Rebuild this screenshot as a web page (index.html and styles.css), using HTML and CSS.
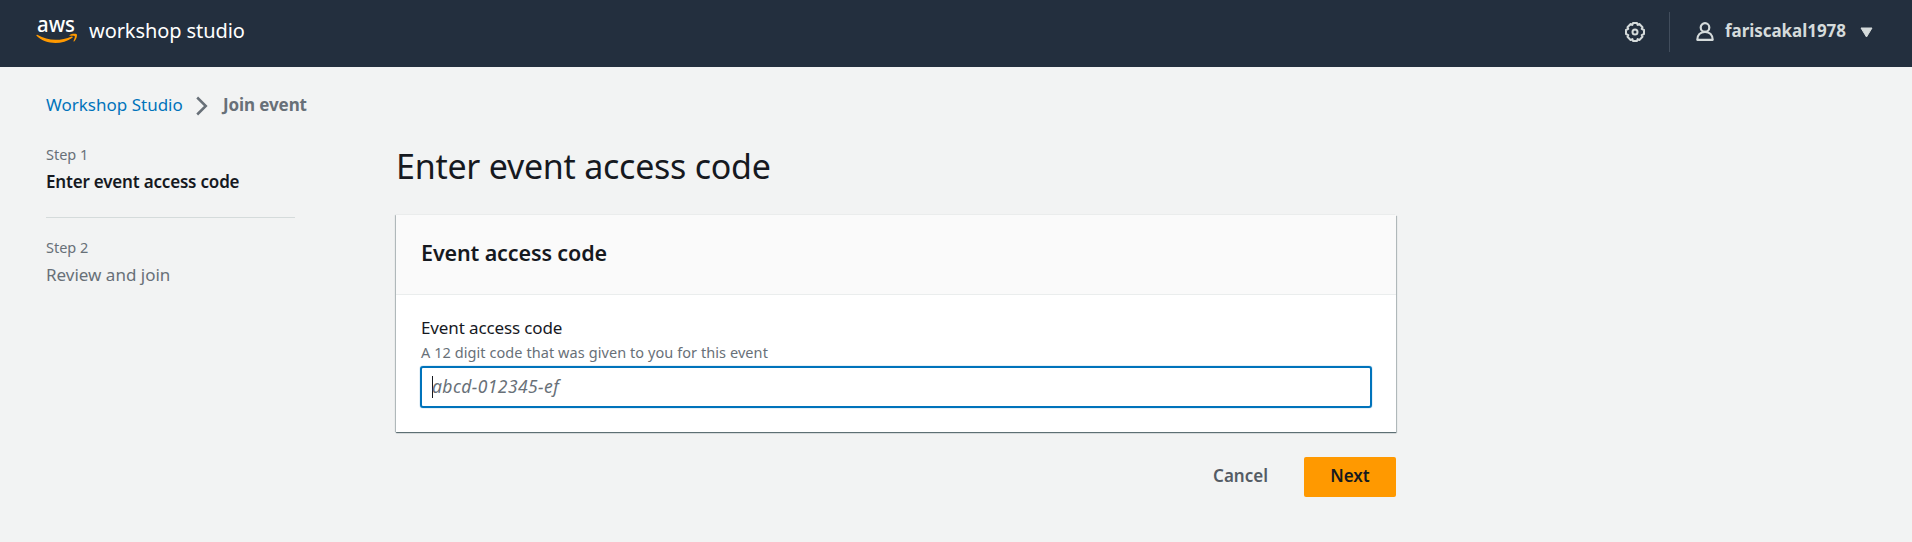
FILE: index.html
```html
<!DOCTYPE html>
<html lang="en">
<head>
<meta charset="utf-8">
<title>Join event - Workshop Studio</title>
<link rel="stylesheet" href="styles.css">
</head>
<body>
<header class="topbar">
  <a class="brand">
    <svg class="logo" width="42" height="28" viewBox="0 0 42 28">
      <text class="logo-text" x="1" y="14" textLength="38" lengthAdjust="spacingAndGlyphs">aws</text>
      <path fill="#ff9900" d="M0.500 17.200c0.300-.5.800-.4 1.200-.1C11.500 23 24.500 23.300 35.600 18.500c1-.4 1.600.6.800 1.200C26 27.200 9.500 26.600.7 18c-.3-.3-.4-.5-.2-.8z"/>
      <path fill="#ff9900" d="M33.500 17.200c2-1.500 5.500-1.700 7.300-.9.7 1.600-.5 5.400-2.600 7.100-.5.400-.9.200-.7-.3.600-1.500 1.700-4.300 1.300-4.900-.6-.7-3.500-.5-4.900-.4-.6 0-.8-.3-.4-.6z"/>
    </svg>
    <span class="brand-name">workshop studio</span>
  </a>
  <div class="utilities">
    <svg class="gear" width="20" height="20" viewBox="0 0 20 20" fill="none" stroke="#d5dbdb" stroke-width="2" stroke-linejoin="round">
      <path d="M8 1h4l.6 1.900 1.800-.9L17.500 5.200l-.8 1.700L19 8v4l-2.300 1.100.8 1.700-3.100 3.200-1.800-.9L12 19H8l-.6-1.900-1.800.9L2.500 14.800l.8-1.700L1 12V8l2.300-1.100-.8-1.700L5.600 2l1.800.9z"/>
      <circle cx="10" cy="10" r="2.500"/>
    </svg>
    <span class="separator"></span>
    <svg class="user-icon" width="18" height="19" viewBox="0 0 18 19" fill="none" stroke="#d5dbdb" stroke-width="2.200" stroke-linejoin="round">
      <circle cx="9" cy="5.500" r="4.300"/>
      <path d="M1.300 17.800c0-4.800 3.200-8 7.700-8s7.700 3.200 7.700 8z"/>
    </svg>
    <span class="user-name">fariscakal1978</span>
    <svg class="caret-down" width="13" height="11" viewBox="0 0 13 11"><path d="M1 1h11L6.500 10z" fill="#d5dbdb" stroke="#d5dbdb" stroke-linejoin="round"/></svg>
  </div>
</header>
<nav class="breadcrumb">
  <a class="crumb-link">Workshop Studio</a>
  <svg class="chevron" width="12" height="20" viewBox="0 0 12 20" fill="none" stroke="#687078" stroke-width="2.500"><path d="M1.200 1.500 9.800 10l-8.600 8.500"/></svg>
  <span class="crumb-current">Join event</span>
</nav>
<div class="wizard">
  <ol class="steps">
    <li class="step"><span class="step-number">Step 1</span><span class="step-title active">Enter event access code</span></li>
    <li class="step"><span class="step-number">Step 2</span><span class="step-title">Review and join</span></li>
  </ol>
  <main class="content">
    <h1 class="page-title">Enter event access code</h1>
    <section class="card">
      <div class="card-header"><h2 class="card-title">Event access code</h2></div>
      <div class="card-body">
        <span class="label">Event access code</span>
        <span class="hint">A 12 digit code that was given to you for this event</span>
        <div class="input"><span class="cursor"></span><span class="placeholder">abcd-012345-ef</span></div>
      </div>
    </section>
    <div class="actions"><span class="button cancel">Cancel</span><span class="button next">Next</span></div>
  </main>
</div>
</body>
</html>
```
FILE: styles.css
```css
body {
  margin: 0;
  min-height: 540px;
  background: #f2f3f3;
  color: #16191f;
  font-family: "Noto Sans", "Open Sans", sans-serif;
  font-size: 17px;
  line-height: 28px;
  white-space: nowrap;
}
.topbar {
  box-sizing: border-box;
  display: flex;
  justify-content: space-between;
  height: 67px;
  padding: 12px 39px 0 36px;
  background: #232f3e;
}
.brand { display: flex; }
.logo { margin-top: 6px; overflow: visible; }
.logo-text { fill: #fff; font-family: "Noto Sans", sans-serif; font-size: 21px; font-weight: 500; }
.brand-name { margin: 5px 0 0 11px; color: #fff; font-size: 20px; letter-spacing: -.08px; }
.utilities { display: flex; align-items: flex-start; color: #d5dbdb; }
.gear { margin-top: 10px; }
.separator { width: 1px; height: 40px; margin: 0 26px 0 24px; background: #414d5c; }
.user-icon { margin-top: 10px; }
.user-name { width: 121px; margin: 5px 14px 0 11px; font-weight: 700; letter-spacing: -.05px; }
.caret-down { margin-top: 15px; }
.breadcrumb { display: flex; align-items: center; padding: 24px 46px 0; }
.crumb-link { width: 136px; color: #0073bb; }
.chevron { margin: 2px 15px 0 14px; }
.crumb-current { color: #687078; font-weight: 700; letter-spacing: -.1px; }
.wizard { display: flex; gap: 100px; padding: 21px 46px 0; }
.steps { width: 249px; margin: 0 1px 0 0; padding: 0; list-style: none; }
.step { display: flex; flex-direction: column; color: #687078; }
.step + .step { margin-top: 21px; padding-top: 15px; border-top: 1px solid #d5dbdb; }
.step-number { font-size: 14.500px; }
.active { color: #16191f; font-weight: 600; letter-spacing: -.19px; }
.content { width: 1000px; }
.page-title { margin: 4px 0 27px; font-size: 34px; font-weight: 400; line-height: 44px; letter-spacing: -.26px; }
.card { background: #fff; box-shadow: 0 1px 1px rgba(0, 28, 36, .5), 1px 1px 1px rgba(0, 28, 36, .2), -1px 0 1px rgba(0, 28, 36, .2); }
.card-header { padding: 24px 25px 27px; border-bottom: 1px solid #eaeded; background: #fafafa; }
.card-title { margin: 0; font-size: 21.500px; font-weight: 600; line-height: 28px; letter-spacing: -.12px; }
.card-body { display: flex; flex-direction: column; padding: 19px 25px 24px; }
.label { letter-spacing: -.12px; }
.hint { color: #687078; font-size: 14.500px; line-height: 20px; letter-spacing: .07px; }
.input { display: flex; align-items: center; box-sizing: border-box; height: 42px; margin: 4px -1px 0; border: 2px solid #0073bb; border-radius: 3px; padding-left: 10px; box-shadow: 0 0 1px #0073bb; line-height: 26px; }
.cursor { width: 1px; height: 22px; margin-right: -1px; background: #16191f; }
.placeholder { margin-bottom: 2px; color: #687078; font-size: 17.500px; font-style: italic; letter-spacing: .42px; }
.actions { display: flex; justify-content: flex-end; gap: 36px; margin-top: 25px; font-weight: 600; line-height: 38px; letter-spacing: 0; }
.cancel { color: #545b64; }
.next { width: 92px; height: 40px; border-radius: 2px; background: #ff9900; text-align: center; }
```
